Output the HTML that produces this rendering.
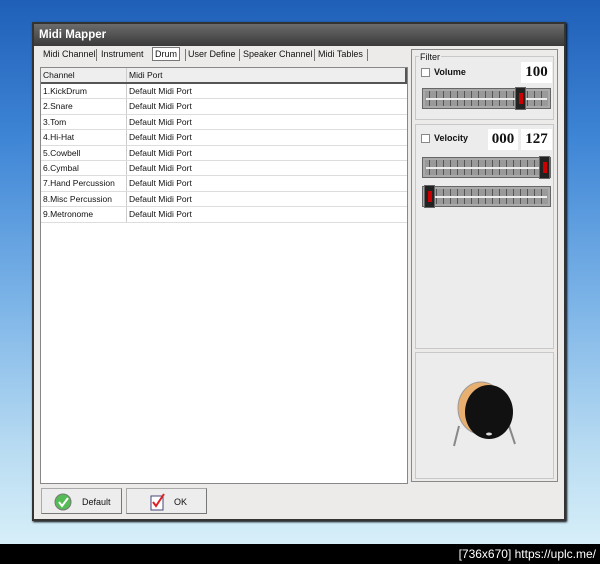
<!DOCTYPE html>
<html><head><style>
*{margin:0;padding:0;box-sizing:border-box}
body{width:600px;height:564px;overflow:hidden;position:relative;font-family:"Liberation Sans",sans-serif;font-size:9px;color:#111;
background:linear-gradient(180deg,#1f5fb8 0%,#3f86d6 25%,#7fb6e8 55%,#b9dcf2 80%,#d6eef8 96%);}
.abs{position:absolute}
#bar{left:0;top:544px;width:600px;height:20px;background:#000;color:#fff;font-size:12px;text-align:right;padding:3px 4px 0 0;font-family:"Liberation Sans",sans-serif}
#win{left:32px;top:22px;width:534px;height:499px;background:#ecebea;border:2px solid #333;box-shadow:1px 1px 2px #000}
#title{left:0;top:0;width:530px;height:22px;background:linear-gradient(#6b6b6b,#3a3a3a);color:#fff;font-weight:bold;font-size:11.5px;padding:5px 0 0 5px}
.tab{top:25px;font-size:9px;color:#111}
#list{left:6px;top:43px;width:368px;height:417px;background:#fff;border:1px solid #888}
.row{position:absolute;left:0;width:366px;height:15.4px;border-bottom:1px solid #ddd;font-size:8.5px;line-height:15px}
.row span{position:absolute;left:2px}.row b{font-weight:normal;position:absolute;left:88px}
.row i{position:absolute;left:85px;top:0;bottom:0;border-left:1px solid #ccc}
.grp{border:1px solid #c8c8c8;background:#ececec}
.num{background:#fff;font-family:"Liberation Serif",serif;font-weight:bold;font-size:15px;text-align:center;line-height:20px;height:21px}
.sl{height:21px;background:repeating-linear-gradient(90deg,#9a9a9a 0 6px,#555 6px 7px);border:1px solid #666;box-shadow:inset 0 0 0 2px #aaa}
.sl:after{content:"";position:absolute;left:3px;right:3px;top:9px;height:2px;background:#eee}
.kn{top:-2px;width:11px;height:23px;background:#222;border:1px solid #666;z-index:2}
.kn:after{content:"";position:absolute;left:3px;top:5px;width:4px;height:11px;background:#c00}
.cb{width:9px;height:9px;border:1px solid #888;background:#fff}
.btn{top:464px;height:26px;border:1px solid #aaa;border-bottom-color:#777;border-right-color:#777;background:#ededed;font-size:9px}
</style></head><body>
<div id="win" class="abs">
<div id="title" class="abs">Midi Mapper</div>
<div class="abs tab" style="left:9px">Midi Channel</div>
<div class="abs" style="left:62px;top:25px;height:12px;border-left:1px solid #777"></div>
<div class="abs tab" style="left:67px">Instrument</div>
<div class="abs tab" style="left:118px;top:23px;border:1px solid #777;padding:1px 2px;background:#fff">Drum</div>
<div class="abs" style="left:151px;top:25px;height:12px;border-left:1px solid #777"></div>
<div class="abs tab" style="left:154px">User Define</div>
<div class="abs" style="left:205px;top:25px;height:12px;border-left:1px solid #777"></div>
<div class="abs tab" style="left:209px">Speaker Channel</div>
<div class="abs" style="left:280px;top:25px;height:12px;border-left:1px solid #777"></div>
<div class="abs tab" style="left:284px">Midi Tables</div>
<div class="abs" style="left:333px;top:25px;height:12px;border-left:1px solid #777"></div>
<div id="list" class="abs">
<div class="row" style="top:0;background:#eee;border-bottom:2px solid #555;border-right:2px solid #555;height:16px"><span>Channel</span><i></i><b>Midi Port</b></div>
<div class="row" style="top:16px"><span>1.KickDrum</span><i></i><b>Default Midi Port</b></div>
<div class="row" style="top:31.4px"><span>2.Snare</span><i></i><b>Default Midi Port</b></div>
<div class="row" style="top:46.8px"><span>3.Tom</span><i></i><b>Default Midi Port</b></div>
<div class="row" style="top:62.2px"><span>4.Hi-Hat</span><i></i><b>Default Midi Port</b></div>
<div class="row" style="top:77.6px"><span>5.Cowbell</span><i></i><b>Default Midi Port</b></div>
<div class="row" style="top:93px"><span>6.Cymbal</span><i></i><b>Default Midi Port</b></div>
<div class="row" style="top:108.4px"><span>7.Hand Percussion</span><i></i><b>Default Midi Port</b></div>
<div class="row" style="top:123.8px"><span>8.Misc Percussion</span><i></i><b>Default Midi Port</b></div>
<div class="row" style="top:139.2px"><span>9.Metronome</span><i></i><b>Default Midi Port</b></div>
</div>
<div class="abs" style="left:377px;top:25px;width:147px;height:433px;border:1px solid #888"></div>
<div class="abs grp" style="left:381px;top:32px;width:139px;height:64px"></div>
<div class="abs" style="left:385px;top:28px;background:#ececec;padding:0 1px;font-size:9px">Filter</div>
<div class="abs cb" style="left:387px;top:44px"></div>
<div class="abs" style="left:400px;top:43px;font-weight:bold;font-size:9px">Volume</div>
<div class="abs num" style="left:487px;top:38px;width:31px">100</div>
<div class="abs sl" style="left:388px;top:64px;width:129px"><div class="abs kn" style="left:92px"></div></div>
<div class="abs grp" style="left:381px;top:100px;width:139px;height:225px"></div>
<div class="abs cb" style="left:387px;top:110px"></div>
<div class="abs" style="left:400px;top:109px;font-weight:bold;font-size:9px">Velocity</div>
<div class="abs num" style="left:454px;top:105px;width:30px">000</div>
<div class="abs num" style="left:487px;top:105px;width:31px">127</div>
<div class="abs sl" style="left:388px;top:133px;width:129px"><div class="abs kn" style="left:116px"></div></div>
<div class="abs sl" style="left:388px;top:162px;width:129px"><div class="abs kn" style="left:1px"></div></div>
<div class="abs grp" style="left:381px;top:328px;width:139px;height:127px"></div>
<svg class="abs" style="left:405px;top:352px" width="95" height="80">
<line x1="20" y1="50" x2="15" y2="70" stroke="#888" stroke-width="2"/><line x1="70" y1="50" x2="76" y2="68" stroke="#888" stroke-width="2"/>
<ellipse cx="42" cy="32" rx="23" ry="26" fill="#e8b070" stroke="#999"/>
<ellipse cx="50" cy="36" rx="24" ry="27" fill="#111"/>
<ellipse cx="50" cy="58" rx="3" ry="1.5" fill="#ddd"/></svg>
<div class="abs btn" style="left:7px;width:81px"><svg class="abs" style="left:12px;top:4px" width="18" height="18"><circle cx="9" cy="9" r="8" fill="#5b5" stroke="#777"/><path d="M5 9l3 4 6-8" stroke="#fff" stroke-width="2" fill="none"/></svg><span class="abs" style="left:40px;top:8px">Default</span></div>
<div class="abs btn" style="left:92px;width:81px"><svg class="abs" style="left:22px;top:4px" width="18" height="18"><rect x="2" y="3" width="12" height="14" fill="#fff" stroke="#447"/><path d="M4 9l3 4 8-12" stroke="#d22" stroke-width="2" fill="none"/></svg><span class="abs" style="left:47px;top:8px">OK</span></div>
</div>
<div id="bar" class="abs">[736x670] https://uplc.me/</div>
</body></html>
